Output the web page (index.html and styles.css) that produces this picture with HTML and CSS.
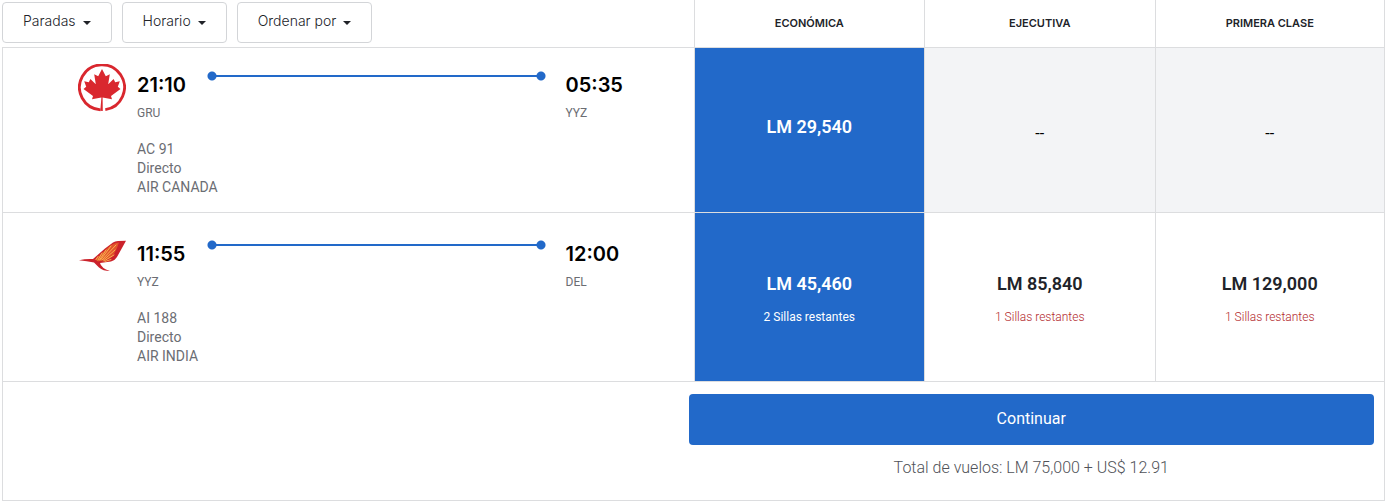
FILE: index.html
```html
<!DOCTYPE html>
<html lang="es">
<head>
<meta charset="utf-8">
<title>Vuelos</title>
<link rel="stylesheet" href="styles.css">
</head>
<body>
<main class="results">
  <table class="fares">
    <thead>
      <tr>
        <td class="filters-cell">
          <div class="filters">
            <button class="filter" type="button">Paradas<span class="caret"></span></button>
            <button class="filter" type="button">Horario<span class="caret"></span></button>
            <button class="filter" type="button">Ordenar por<span class="caret"></span></button>
          </div>
        </td>
        <th class="cabin" scope="col">ECONÓMICA</th>
        <th class="cabin" scope="col">EJECUTIVA</th>
        <th class="cabin" scope="col">PRIMERA CLASE</th>
      </tr>
    </thead>
    <tbody>
      <tr>
        <td class="flight">
          <div class="flight-layout">
            <svg class="logo" viewBox="0 0 48 48" role="img" aria-label="Air Canada">
              <path d="M22.500 45.800A22.500 22.500 0 1 1 27.300 45.600" fill="none" stroke="#d9272e" stroke-width="2.800"/>
              <path d="M24 5L27.800 12.200L31.800 10.200L30.200 20.300L35.600 15L37.200 18.200L41.800 17.200L39.800 22.800L42.500 25L33 32L34 35.200L24.600 33.400L24.800 47L22.300 46.800L23.400 33.400L14 35.200L15 32L5.500 25L8.200 22.800L6.200 17.200L10.800 18.200L12.400 15L17.800 20.300L16.200 10.200L20.200 12.200Z" fill="#d9272e"/>
            </svg>
            <div class="departure">
              <div class="time">21:10</div>
              <div class="airport">GRU</div>
            </div>
            <div class="route"></div>
            <div class="arrival">
              <div class="time">05:35</div>
              <div class="airport">YYZ</div>
            </div>
            <div class="details">
              <div>AC 91</div>
              <div>Directo</div>
              <div>AIR CANADA</div>
            </div>
          </div>
        </td>
        <td class="fare fare-selected"><div class="price">LM 29,540</div></td>
        <td class="fare fare-none"><div class="dash">--</div></td>
        <td class="fare fare-none"><div class="dash">--</div></td>
      </tr>
      <tr class="row-seats">
        <td class="flight">
          <div class="flight-layout">
            <svg class="logo" viewBox="0 0 48 48" role="img" aria-label="Air India">
              <path d="M1 27.200Q8 25.500 15 26L27 15.500L35 9.500Q37 8 40 8L48 7.800L44 15L39 24Q37 27.500 33 28.500L22 30Q23 35 32 38Q25 38 21 34.500L16 29.500Q9 28 1 27.200Z" fill="#cb222b"/>
              <path d="M17 26.500L30 14.500Q35 10 41 9.500L39 15L36 21Q34 25 30 26L20 28.500Z" fill="#e2522b"/>
              <g stroke="#fabb52" stroke-width="0.900" stroke-linecap="round">
                <path d="M20 27L24 20M21.500 27L28 17M22.500 27L33 13M24 27L38 12M25 27.500L37 17M26 28L36 22M27 28.500L33 26.500M18 26.500L20 23.500"/>
              </g>
            </svg>
            <div class="departure">
              <div class="time">11:55</div>
              <div class="airport">YYZ</div>
            </div>
            <div class="route"></div>
            <div class="arrival">
              <div class="time">12:00</div>
              <div class="airport">DEL</div>
            </div>
            <div class="details">
              <div>AI 188</div>
              <div>Directo</div>
              <div>AIR INDIA</div>
            </div>
          </div>
        </td>
        <td class="fare fare-selected"><div class="price">LM 45,460</div><div class="seats">2 Sillas restantes</div></td>
        <td class="fare"><div class="price">LM 85,840</div><div class="seats">1 Sillas restantes</div></td>
        <td class="fare"><div class="price">LM 129,000</div><div class="seats">1 Sillas restantes</div></td>
      </tr>
    </tbody>
  </table>
  <div class="summary">
    <div class="checkout">
      <button class="continue" type="button">Continuar</button>
      <p class="total">Total de vuelos: LM 75,000 + US$ 12.91</p>
    </div>
  </div>
</main>
</body>
</html>
```
FILE: styles.css
```css
:root {
  --line: #dcdddf;
  --blue: #2269c9;
  --ink: #212329;
  --muted: #6b6d73;
}

* {
  box-sizing: border-box;
}

body {
  margin: 0;
  background: #fff;
  color: var(--ink);
  font-family: Roboto, "Liberation Sans", sans-serif;
}

.results {
  padding: 0 1px 0 2px;
}

.fares {
  width: 100%;
  table-layout: fixed;
  border-collapse: separate;
  border-spacing: 0;
}

.fares td,
.fares th {
  padding: 0;
  border-bottom: 1px solid var(--line);
}

.fares th,
.fare {
  border-left: 1px solid var(--line);
}

.fares th:last-child,
.fare:last-child {
  border-right: 1px solid var(--line);
}

.filters-cell {
  width: 50%;
}

.filters {
  display: flex;
  gap: 10px;
  padding: 2px 0 4px;
}

.filter {
  display: flex;
  align-items: center;
  gap: 7px;
  height: 41px;
  padding: 0 20px 3px;
  border: 1px solid #d3d5d8;
  border-radius: 4px;
  background: #fff;
  color: var(--ink);
  font: 300 14px/20px Inter, sans-serif;
  white-space: nowrap;
}

.caret {
  margin-top: 4px;
  border: 4px solid transparent;
  border-top-color: var(--ink);
  border-bottom: 0;
}

.fares .cabin {
  padding-bottom: 2px;
  font: 600 11px/16px Inter, sans-serif;
}

.flight {
  vertical-align: bottom;
}

.fares .flight {
  border-left: 1px solid var(--line);
}

.flight-layout {
  display: grid;
  grid-template-columns: 48px 51px 1fr 55px;
  padding: 16px 73px 15px 75px;
}

.row-seats .flight-layout {
  padding-top: 20px;
}

.logo {
  width: 48px;
  height: 48px;
}

.departure {
  padding-left: 11px;
}

.time {
  padding-top: 9px;
  color: #000;
  font: 600 20px/24px Inter, sans-serif;
  white-space: nowrap;
}

.airport {
  padding-top: 8px;
  color: var(--muted);
  font-size: 12px;
  line-height: 16px;
}

.route {
  height: 10px;
  margin: 7px 20px 0 30px;
  background:
    radial-gradient(circle at 5px 5px, var(--blue) 4px, transparent 5px),
    radial-gradient(circle at calc(100% - 5px) 5px, var(--blue) 4px, transparent 5px),
    linear-gradient(var(--blue), var(--blue)) center / calc(100% - 10px) 2px no-repeat;
}

.details {
  grid-column: 2 / -1;
  padding: 19px 0 0 11px;
  color: var(--muted);
  font-size: 14px;
  line-height: 19px;
}

.fare {
  text-align: center;
  vertical-align: middle;
}

.price {
  padding-bottom: 6px;
  font-size: 18px;
  font-weight: 600;
  line-height: 24px;
}

.seats {
  padding-top: 7px;
  color: #b3282d;
  font-size: 12px;
  font-weight: 300;
  line-height: 16px;
}

.row-seats .price {
  padding-top: 2px;
}

.fare-selected {
  background: var(--blue);
  color: #fff;
}

.fare-selected .seats {
  color: #fff;
  font-weight: 400;
}

.fare-none {
  background: #f3f4f6;
}

.dash {
  padding-top: 8px;
  color: #000;
  font-size: 16px;
  line-height: 20px;
}

.summary {
  display: flex;
  justify-content: flex-end;
  padding: 12px 10px 20px 0;
  border: 1px solid var(--line);
  border-top: 0;
}

.checkout {
  width: 50%;
  text-align: center;
}

.continue {
  width: 100%;
  height: 51px;
  padding-bottom: 2px;
  border: 0;
  border-radius: 4px;
  background: var(--blue);
  color: #fff;
  font: 400 16px/24px Roboto, sans-serif;
}

.total {
  margin: 11px 0 0;
  color: #505258;
  font-size: 16px;
  font-weight: 300;
  line-height: 24px;
}
```
